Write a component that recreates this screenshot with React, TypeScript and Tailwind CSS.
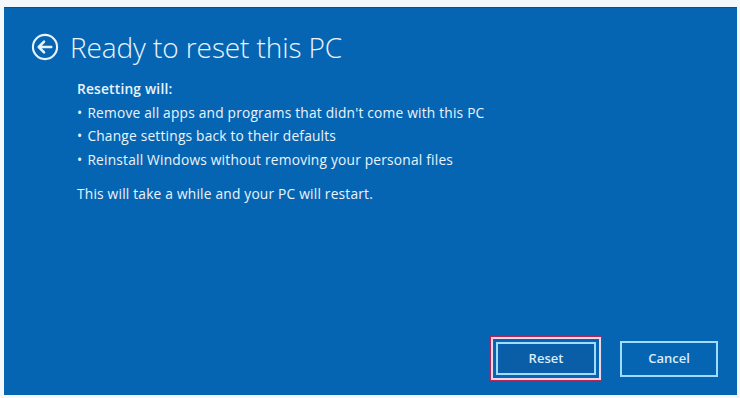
import React from "react";

export default function App() {
  return (
    <div className="w-[740px] h-[398px] bg-[#f4f8fb] pt-[7px] pl-[4px] pr-[3px] pb-[3px]" style={{ fontFamily: '"Open Sans", "Noto Sans", sans-serif' }}>
      <div className="w-full h-full bg-[#0665b2] flex flex-col border-t border-[#0a4f8a]">
        <div className="flex items-center pl-[27px] pt-[25px] gap-[11px]">
          <svg width="28" height="28" viewBox="0 0 29 29" fill="none" stroke="#e8f3fb" strokeWidth="2.2">
            <circle cx="14.5" cy="14.5" r="12.5" />
            <path d="M21 14.5H8.5M13.5 9L8 14.5L13.5 20" strokeLinecap="round" strokeLinejoin="round" strokeWidth="2.6" />
          </svg>
          <div className="text-[28px] font-light text-[#eaf4fc] leading-none tracking-[-0.1px]">Ready to reset this PC</div>
        </div>
        <div className="pl-[73px] pt-[16px] text-[13.75px] text-[#eaf4fc] leading-[23.5px] tracking-[0.2px]">
          <div className="font-semibold">Resetting will:</div>
          <ul className="">
            <li className="flex gap-[5px]"><span>•</span><span>Remove all apps and programs that didn't come with this PC</span></li>
            <li className="flex gap-[5px]"><span>•</span><span>Change settings back to their defaults</span></li>
            <li className="flex gap-[5px]"><span>•</span><span>Reinstall Windows without removing your personal files</span></li>
          </ul>
          <div className="mt-[11px]">This will take a while and your PC will restart.</div>
        </div>
        <div className="flex-1" />
        <div className="flex justify-end items-center gap-[19px] pr-[19px] pb-[15px]">
          <div className="border-2 border-[#f0d6e4] outline outline-1 outline-[#b0285a] p-[3px]">
            <button className="w-[100px] h-[33px] border-2 border-[#9fdcff] bg-[#0a5ea8] text-[13px] font-semibold text-[#d9ecfa]">Reset</button>
          </div>
          <button className="w-[98px] h-[36px] border-2 border-[#9fdcff] bg-[#0665b2] text-[13px] font-semibold text-[#d9ecfa]">Cancel</button>
        </div>
      </div>
    </div>
  );
}
